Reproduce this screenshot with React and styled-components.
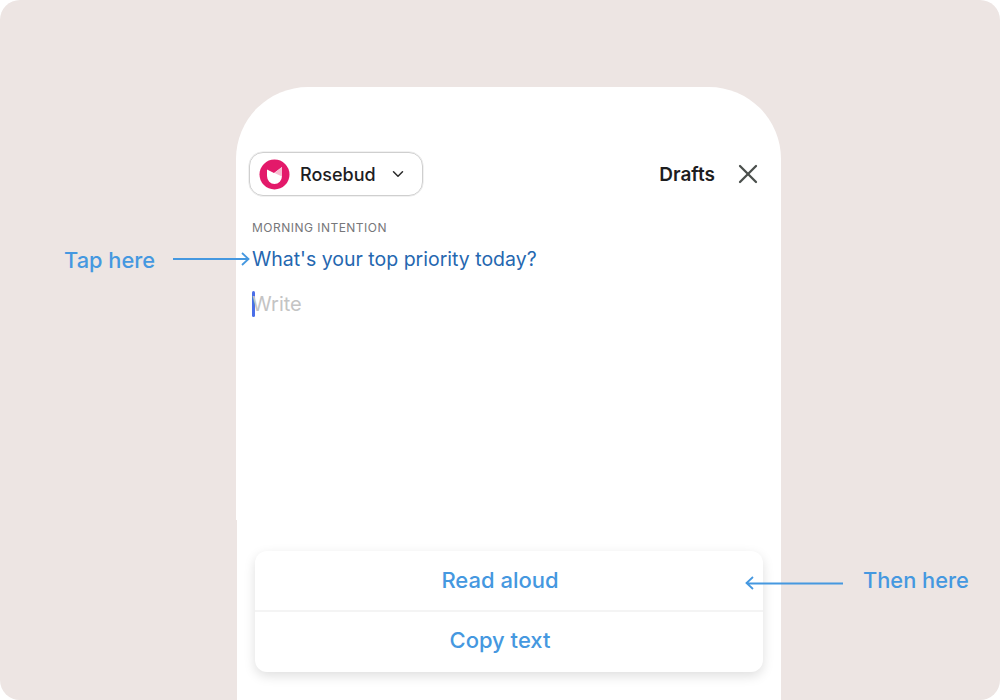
import React from "react"
import styled, { createGlobalStyle } from "styled-components"
import { ChevronDown, X } from "lucide-react"

const Global = createGlobalStyle`
  html, body {
    margin: 0;
    padding: 0;
    background: #fff;
  }
  body {
    font-family: "Inter", "Liberation Sans", sans-serif;
  }
`

const Stage = styled.div`
  position: relative;
  width: 1000px;
  height: 700px;
  overflow: hidden;
  display: flex;
  flex-direction: column;
  align-items: flex-start;
  padding: 87px 0 0 236px;
  box-sizing: border-box;
  background: #ede5e3;
  border-radius: 20px;
`
const PhoneTop = styled.div`
  width: 545px;
  height: 433px;
  box-sizing: border-box;
  padding: 65px 12px 0 13px;
  background: #fff;
  border-radius: 72px 72px 0 0;
`
const PhoneBottom = styled.div`
  width: 544px;
  height: 180px;
  margin-left: 1px;
  box-sizing: border-box;
  padding: 31px 18px 0;
  background: #fff;
`
const Header = styled.div`
  display: flex;
  align-items: center;
  justify-content: space-between;
`
const Chip = styled.div`
  width: 174px;
  height: 44px;
  display: flex;
  align-items: center;
  gap: 10px;
  padding-left: 9px;
  box-sizing: border-box;
  border: 1px solid #cfcfcf;
  border-radius: 14px;
  box-shadow: 0 0 0 0.5px #e4e4e4;
`
const Name = styled.span`
  font-size: 18px;
  font-weight: 500;
  color: #1d1d1f;
  margin-right: 3px;
`
const Actions = styled.div`
  display: flex;
  align-items: center;
  gap: 17px;
  padding-right: 5px;
`
const Drafts = styled.span`
  font-size: 19px;
  font-weight: 600;
  color: #1d1d1f;
`
const Body = styled.div`
  padding: 24px 0 0 3px;
`
const Eyebrow = styled.div`
  font-size: 12px;
  line-height: 16px;
  letter-spacing: 0.48px;
  color: #77777a;
`
const Prompt = styled.div`
  margin-top: 10px;
  font-size: 19.5px;
  line-height: 26px;
  color: #2567b0;
`
const Field = styled.div`
  margin-top: 19px;
  height: 26px;
  display: flex;
  align-items: center;
  font-size: 20px;
  color: #c4c4c4;
`
const Caret = styled.span`
  width: 3px;
  height: 26px;
  flex: none;
  margin-right: -3px;
  background: #4a6ee8;
  border-radius: 1.5px;
`
const Menu = styled.div`
  width: 508px;
  background: #fff;
  border-radius: 12px;
  box-shadow: 0 4px 12px rgba(0, 0, 0, 0.13);
`
const MenuItem = styled.div`
  height: ${p => (p.$divided ? 62 : 59)}px;
  display: flex;
  align-items: center;
  justify-content: center;
  padding: 0 18px ${p => (p.$divided ? 4 : 1)}px 0;
  font-size: 22px;
  font-weight: 500;
  color: #4598e0;
  border-top: ${p => (p.$divided ? "2px solid #f4f4f4" : "none")};
  box-sizing: border-box;
`
const Note = styled.div`
  position: absolute;
  left: ${p => p.$x}px;
  top: ${p => p.$y}px;
  font-size: 21.8px;
  line-height: 28px;
  font-weight: 500;
  color: #4598e0;
  white-space: nowrap;
`
const Arrow = styled.svg`
  position: absolute;
  left: ${p => p.$x}px;
  top: ${p => p.$y}px;
  fill: none;
  stroke: #4598e0;
  stroke-width: 1.8;
`

const Tulip = () => (
  <svg width="31" height="31" viewBox="0 0 31 31">
    <circle cx="15.5" cy="15.5" r="15" fill="#e3196a" />
    <path d="M8 10.5 L15 14 L23 8 V17 A7.5 8 0 0 1 8 17 Z" fill="#fff" />
    <path d="M15.5 14 L23 8 V17.5 Z" fill="#f7bcd0" />
  </svg>
)

export default function App() {
  return (
    <>
      <Global />
      <Stage>
        <PhoneTop>
          <Header>
            <Chip>
              <Tulip />
              <Name>Rosebud</Name>
              <ChevronDown size={18} color="#2a2a2a" strokeWidth={2} />
            </Chip>
            <Actions>
              <Drafts>Drafts</Drafts>
              <X size={32} color="#4a4f4c" strokeWidth={1.7} />
            </Actions>
          </Header>
          <Body>
            <Eyebrow>MORNING INTENTION</Eyebrow>
            <Prompt>What's your top priority today?</Prompt>
            <Field>
              <Caret />
              Write
            </Field>
          </Body>
        </PhoneTop>
        <PhoneBottom>
          <Menu>
            <MenuItem>Read aloud</MenuItem>
            <MenuItem $divided>Copy text</MenuItem>
          </Menu>
        </PhoneBottom>
        <Note $x={64} $y={246}>Tap here</Note>
        <Arrow $x={172} $y={250} width="80" height="18" viewBox="0 0 80 18">
          <path d="M1 9 H76 M70 3 L76.5 9 L70 15" />
        </Arrow>
        <Note $x={863} $y={566}>Then here</Note>
        <Arrow $x={744} $y={574} width="100" height="18" viewBox="0 0 100 18">
          <path d="M99 9.5 H3 M9 3 L2.5 9 L9 15" />
        </Arrow>
      </Stage>
    </>
  )
}
